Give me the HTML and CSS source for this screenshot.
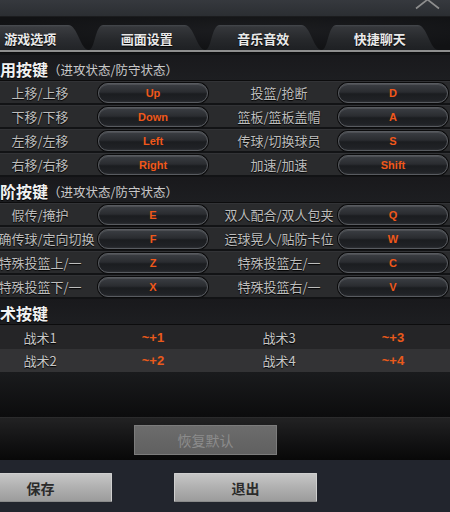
FILE: index.html
```html
<!DOCTYPE html>
<html lang="zh-CN">
<head>
<meta charset="utf-8">
<title>设置</title>
<link rel="stylesheet" href="styles.css">
</head>
<body>
<div class="page">
  <div class="topbar">
    <svg class="close" width="26" height="10" viewBox="0 0 26 10"><polyline points="1,8.5 12.5,-0.5 24,8.5" fill="none" stroke="#8e8e8e" stroke-width="1.6"/></svg>
  </div>
  <div class="tabs">
    <div class="tab active"><span>游戏选项</span></div>
    <div class="tab"><span>画面设置</span></div>
    <div class="tab"><span>音乐音效</span></div>
    <div class="tab"><span>快捷聊天</span></div>
  </div>
  <div class="tabline"></div>
  <div class="content">
    <div class="sec-head"><span class="sec-title">通用按键</span><span class="sec-sub">（进攻状态/防守状态）</span></div>
    <div class="row"><span class="lbl-l">上移/上移</span><span class="key">Up</span><span class="lbl-r">投篮/抢断</span><span class="key">D</span></div>
    <div class="row"><span class="lbl-l">下移/下移</span><span class="key">Down</span><span class="lbl-r">篮板/篮板盖帽</span><span class="key">A</span></div>
    <div class="row"><span class="lbl-l">左移/左移</span><span class="key">Left</span><span class="lbl-r">传球/切换球员</span><span class="key">S</span></div>
    <div class="row"><span class="lbl-l">右移/右移</span><span class="key">Right</span><span class="lbl-r">加速/加速</span><span class="key">Shift</span></div>

    <div class="sec-head"><span class="sec-title">进阶按键</span><span class="sec-sub">（进攻状态/防守状态）</span></div>
    <div class="row"><span class="lbl-l">假传/掩护</span><span class="key">E</span><span class="lbl-r">双人配合/双人包夹</span><span class="key">Q</span></div>
    <div class="row"><span class="lbl-l">精确传球/定向切换</span><span class="key">F</span><span class="lbl-r">运球晃人/贴防卡位</span><span class="key">W</span></div>
    <div class="row"><span class="lbl-l">特殊投篮上/一</span><span class="key">Z</span><span class="lbl-r">特殊投篮左/一</span><span class="key">C</span></div>
    <div class="row"><span class="lbl-l">特殊投篮下/一</span><span class="key">X</span><span class="lbl-r">特殊投篮右/一</span><span class="key">V</span></div>

    <div class="sec-head"><span class="sec-title">战术按键</span></div>
    <div class="trow trow-a"><span class="lbl-l">战术1</span><span class="val">~+1</span><span class="lbl-r">战术3</span><span class="val">~+3</span></div>
    <div class="trow trow-b"><span class="lbl-l">战术2</span><span class="val">~+2</span><span class="lbl-r">战术4</span><span class="val">~+4</span></div>
    <div class="filler"></div>
  </div>
  <div class="restore-bar"><button class="btn-restore">恢复默认</button></div>
  <div class="bottom-bar">
    <button class="btn-main btn-save">保存</button>
    <button class="btn-main btn-exit">退出</button>
  </div>
</div>
</body>
</html>
```
FILE: styles.css
```css
* { box-sizing: border-box; }
html, body { margin: 0; padding: 0; }
body {
  width: 450px;
  height: 512px;
  overflow: hidden;
  background: #111214;
  font-family: "Noto Sans CJK SC", "Noto Sans", sans-serif;
}
.page {
  width: 450px;
  height: 512px;
  display: flex;
  flex-direction: column;
  overflow: hidden;
}
.topbar {
  height: 17px;
  flex: none;
  background: linear-gradient(#36393e, #2b2e32);
  border-bottom: 1px solid #1b1c1e;
  display: flex;
  justify-content: flex-end;
  padding-right: 9px;
}
.close { display: block; }
.tabs {
  height: 33px;
  flex: none;
  padding-top: 8px;
  display: flex;
  margin-left: -28px;
  background: radial-gradient(ellipse at 60% 40%, #1c1d20, #111214 70%);
}
.tab {
  width: 116.5px;
  height: 25px;
  flex: none;
  display: flex;
  align-items: center;
  justify-content: center;
  clip-path: path('M0 25 C7 25 6 0 15 0 L96 0 C106 0 108 25 117 25 Z');
  background: linear-gradient(#45484d 0px, #35373b 2px, #26282b 60%, #1e2023);
  color: #e9e9e9;
  font-size: 13px;
  font-weight: bold;
  text-shadow: 0 1px 1px #000;
  padding-top: 2px;
}
.tab.active {
  background: linear-gradient(#4a4d52 0px, #3a3c40 2px, #2a2c30 60%, #222427);
}
.tabline {
  height: 3px;
  flex: none;
  border-top: 2px solid #8e8e8e;
  background: #0d0d0e;
}
.content {
  flex: none;
  padding-top: 2px;
  background: #121315;
  display: flex;
  flex-direction: column;
}
.sec-head {
  height: 26px;
  display: flex;
  align-items: center;
  padding-top: 3px;
  background: linear-gradient(#19191c, #1d1e21);
  border-bottom: 1px solid #0c0c0d;
  white-space: nowrap;
}
.sec-title {
  margin-left: -16px;
  font-size: 16px;
  font-weight: bold;
  color: #f2f2f2;
  text-shadow: 0 1px 1px #000;
}
.sec-sub {
  font-size: 12.5px;
  color: #c9c9c9;
  margin-left: 0;
}
.row {
  height: 22px;
  margin-bottom: 2px;
  display: flex;
  align-items: center;
  background: #2a2b2d;
  border-top: 1px solid #323336;
}
.lbl-l, .lbl-r {
  display: flex;
  justify-content: center;
  white-space: nowrap;
  font-size: 13px;
  color: #bdbdbd;
  text-shadow: 0 1px 1px #000;
  flex: none;
}
.lbl-l { width: 80px; }
.lbl-r { width: 118px; margin-left: 12px; }
.key {
  width: 110px;
  height: 20px;
  flex: none;
  margin-left: 18px;
  border-radius: 10px;
  border: 1px solid #585b60;
  box-shadow: 0 0 0 1px #0b0b0c, inset 0 1px 0 rgba(255,255,255,0.10);
  background: linear-gradient(#3b3e43, #2a2c30 45%, #1b1d20 55%, #202226 90%, #2c2e32);
  display: flex;
  align-items: center;
  justify-content: center;
  font-family: "Liberation Sans", Arial, sans-serif;
  font-weight: bold;
  font-size: 11px;
  color: #f0581a;
}
.lbl-r + .key { margin-left: 0; }
.trow {
  display: flex;
  align-items: center;
}
.trow .lbl-l, .trow .lbl-r { color: #c8c8c8; }
.trow-a { height: 24px; background: #252527; }
.trow-b { height: 23px; background: #333335; }
.val {
  width: 110px;
  flex: none;
  margin-left: 18px;
  text-align: center;
  font-family: "Liberation Sans", Arial, sans-serif;
  font-weight: bold;
  font-size: 13px;
  color: #ea5a1b;
}
.lbl-r + .val { margin-left: 0; }
.filler {
  height: 45px;
  background: linear-gradient(#1a1b1d, #0c0c0d);
}
.restore-bar {
  height: 43px;
  flex: none;
  padding-top: 7px;
  padding-left: 134px;
  border-top: 1px solid #2b2b2c;
  background: linear-gradient(#222223, #141415 50%, #080808);
}
.btn-restore {
  display: block;
  width: 143px;
  height: 30px;
  margin: 0;
  padding: 0;
  border: 1px solid #7c7c7c;
  border-radius: 0;
  background: linear-gradient(#6c6c6c, #606060);
  font-family: "Noto Sans CJK SC", sans-serif;
  font-size: 14px;
  color: #8c8c8c;
}
.bottom-bar {
  height: 52px;
  flex: none;
  background: #22252d;
  display: flex;
  align-items: flex-start;
  padding-top: 13px;
}
.btn-main {
  flex: none;
  width: 143px;
  height: 29px;
  margin: 0;
  padding: 0;
  border: 1px solid #cfcfcf;
  border-bottom-color: #8a8a8a;
  border-radius: 1px;
  background: linear-gradient(#c6c6c6, #b0b0b0 50%, #9c9c9c);
  font-family: "Noto Sans CJK SC", sans-serif;
  font-size: 14px;
  font-weight: bold;
  color: #2b2b2b;
}
.btn-save { margin-left: -31px; }
.btn-exit { margin-left: 62px; }
```
